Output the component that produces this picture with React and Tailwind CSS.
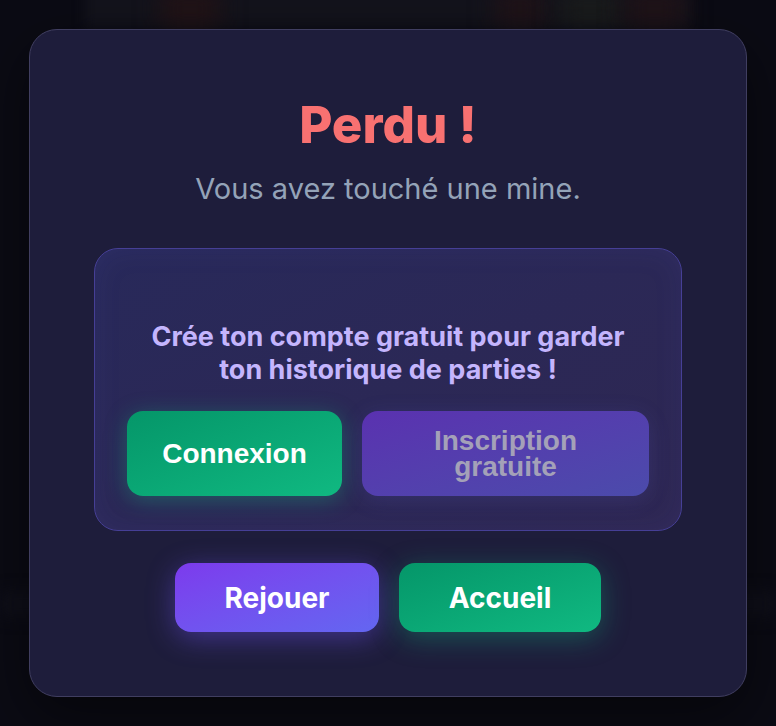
export default function App() {
  return (
    <div className="relative w-[776px] h-[726px] overflow-hidden bg-[#0b0b14] flex items-center justify-center" style={{ fontFamily: 'Inter, "Liberation Sans", sans-serif' }}>
      {/* blurred background game */}
      <div className="absolute left-[85px] top-[-20px] w-[605px] h-[48px] bg-[#13131c] blur-[6px]" />
      <div className="absolute left-[160px] top-[-10px] w-[60px] h-[38px] bg-[#221316] blur-[12px]" />
      <div className="absolute left-[495px] top-[-10px] w-[50px] h-[38px] bg-[#201318] blur-[12px]" />
      <div className="absolute left-[560px] top-[-10px] w-[60px] h-[38px] bg-[#1a1c1c] blur-[12px]" />
      <div className="absolute left-[625px] top-[-10px] w-[60px] h-[38px] bg-[#201318] blur-[12px]" />
      <div className="absolute left-0 top-[592px] w-[776px] h-[24px] bg-[#10101a] blur-[8px]" />

      <div className="relative w-[718px] h-[668px] rounded-[28px] border border-[#403e60] bg-[#1e1d3b] px-16 pt-16 pb-16 flex flex-col items-center shadow-[0_20px_60px_rgba(0,0,0,0.5)]">
        <h1 className="text-[51px] leading-[60px] font-extrabold text-[#f87171] mt-[1px]">Perdu !</h1>
        <p className="text-[29px] leading-[39px] text-[#94a3b8] mt-[14px]">Vous avez touché une mine.</p>

        <div className="mt-[40px] w-full rounded-[24px] border border-[#463f96] bg-gradient-to-br from-[#28295a] to-[#2e2752] px-8 pt-[71px] pb-[34px] flex flex-col items-center shadow-[inset_0_0_30px_rgba(99,102,241,0.08)]">
          <p className="text-[27px] leading-[33px] font-bold text-[#c4b5fd] text-center">
            Crée ton compte gratuit pour garder
            <br />
            ton historique de parties !
          </p>
          <div className="mt-[25px] w-full flex gap-5">
            <button className="w-[215px] h-[85px] shrink-0 rounded-2xl bg-gradient-to-br from-[#059669] to-[#10b981] text-white text-[28px] font-bold shadow-[0_4px_22px_rgba(16,185,129,0.35)] flex items-center justify-center" style={{ fontFamily: '"Liberation Sans", Arial, sans-serif' }}>
              Connexion
            </button>
            <button className="flex-1 h-[85px] rounded-2xl bg-gradient-to-br from-[#5a31b0] to-[#4b4bab] text-[#a4a1b8] text-[28px] leading-[26px] font-bold flex items-center justify-center px-12 text-center shadow-[0_4px_22px_rgba(99,102,241,0.15)]" style={{ fontFamily: '"Liberation Sans", Arial, sans-serif' }}>
              Inscription gratuite
            </button>
          </div>
        </div>

        <div className="mt-[32px] flex gap-5">
          <button className="w-[204px] h-[69px] rounded-2xl bg-gradient-to-br from-[#7c3aed] to-[#6366f1] text-white text-[28px] font-bold flex items-center justify-center shadow-[0_6px_28px_rgba(109,80,240,0.45)]">
            Rejouer
          </button>
          <button className="w-[202px] h-[69px] rounded-2xl bg-gradient-to-br from-[#059669] to-[#10b981] text-white text-[28px] font-bold flex items-center justify-center shadow-[0_6px_28px_rgba(16,185,129,0.35)]">
            Accueil
          </button>
        </div>
      </div>
    </div>
  );
}
